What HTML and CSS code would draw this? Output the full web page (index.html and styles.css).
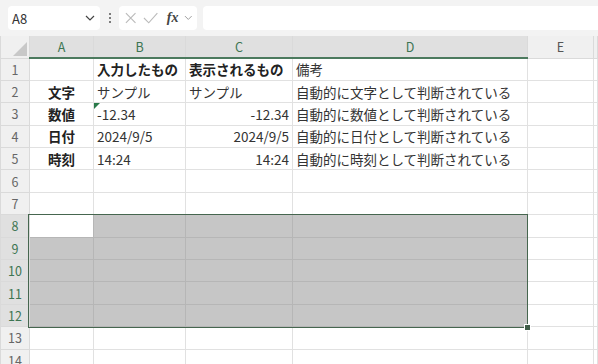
FILE: index.html
```html
<!DOCTYPE html>
<html lang="ja">
<head>
<meta charset="utf-8"/>
<title>Sheet1</title>
<link rel="stylesheet" href="styles.css">
</head>
<body>
<div class="toolbar">
  <div class="namebox">
    <span>A8</span>
    <svg width="10" height="6" viewBox="0 0 10 6"><path d="M1 1 L5 5 L9 1" fill="none" stroke="#444" stroke-width="1.2"/></svg>
  </div>
  <div class="kebab"><i></i><i></i><i></i></div>
  <div class="fxbox">
    <svg width="14" height="14" viewBox="0 0 14 14"><path d="M2 2 L12 12 M12 2 L2 12" stroke="#bbb" stroke-width="1.2"/></svg>
    <svg width="16" height="14" viewBox="0 0 16 14"><path d="M1 7 L6 12 L15 2" fill="none" stroke="#bbb" stroke-width="1.2"/></svg>
    <span class="fx">fx</span>
    <svg width="9" height="6" viewBox="0 0 9 6"><path d="M1 1 L4.5 4.5 L8 1" fill="none" stroke="#999" stroke-width="1"/></svg>
  </div>
  <div class="formula"></div>
</div>

<div class="sheet">
  <table class="grid">
    <colgroup>
      <col style="width:29px"><col style="width:64px"><col style="width:92px"><col style="width:107px"><col style="width:235px"><col style="width:66px"><col>
    </colgroup>
    <tr class="colhdr">
      <th class="corner"><span class="tri"></span></th>
      <th class="on">A</th><th class="on">B</th><th class="on">C</th><th class="on">D</th><th>E</th><th></th>
    </tr>
    <tr><th>1</th><td></td><td class="b">入力したもの</td><td class="b">表示されるもの</td><td>備考</td><td></td><td></td></tr>
    <tr><th>2</th><td class="b c">文字</td><td>サンプル</td><td>サンプル</td><td>自動的に文字として判断されている</td><td></td><td></td></tr>
    <tr><th>3</th><td class="b c">数値</td><td class="flag">-12.34</td><td class="r">-12.34</td><td>自動的に数値として判断されている</td><td></td><td></td></tr>
    <tr><th>4</th><td class="b c">日付</td><td>2024/9/5</td><td class="r">2024/9/5</td><td>自動的に日付として判断されている</td><td></td><td></td></tr>
    <tr><th>5</th><td class="b c">時刻</td><td>14:24</td><td class="r">14:24</td><td>自動的に時刻として判断されている</td><td></td><td></td></tr>
    <tr><th>6</th><td></td><td></td><td></td><td></td><td></td><td></td></tr>
    <tr><th>7</th><td></td><td></td><td></td><td></td><td></td><td></td></tr>
    <tr class="sel"><th>8</th><td class="active"></td><td></td><td></td><td></td><td class="out"></td><td class="out"></td></tr>
    <tr class="sel"><th>9</th><td></td><td></td><td></td><td></td><td class="out"></td><td class="out"></td></tr>
    <tr class="sel"><th>10</th><td></td><td></td><td></td><td></td><td class="out"></td><td class="out"></td></tr>
    <tr class="sel"><th>11</th><td></td><td></td><td></td><td></td><td class="out"></td><td class="out"></td></tr>
    <tr class="sel"><th>12</th><td></td><td></td><td></td><td></td><td class="out"></td><td class="out"></td></tr>
    <tr><th>13</th><td></td><td></td><td></td><td></td><td></td><td></td></tr>
    <tr><th>14</th><td></td><td></td><td></td><td></td><td></td><td></td></tr>
  </table>
  <div class="selection"><span class="handle"></span></div>
</div>
</body>
</html>
```

FILE: styles.css
```css
body {
  margin: 0;
  background-color: #ffffff;
  font-family: "Noto Sans CJK JP", "Noto Sans", sans-serif;
  overflow: hidden;
}
.toolbar {
  display: flex;
  align-items: center;
  height: 36px;
  padding: 0 0 0 8px;
  background-color: #f3f3f3;
  box-sizing: border-box;
}
.namebox {
  display: flex;
  align-items: center;
  justify-content: space-between;
  width: 92px;
  height: 24px;
  padding: 0 5px 0 4px;
  box-sizing: border-box;
  background-color: #ffffff;
  border-radius: 4px;
  font-size: 13px;
  color: #333;
}
.kebab {
  display: flex;
  flex-direction: column;
  gap: 2px;
  margin: 0 8px 0 9px;
}
.kebab i {
  display: block;
  width: 2px;
  height: 2px;
  background-color: #555;
  border-radius: 1px;
}
.fxbox {
  display: flex;
  align-items: center;
  gap: 6px;
  width: 78px;
  height: 24px;
  padding: 0 4px 0 5px;
  box-sizing: border-box;
  background-color: #ffffff;
  border-radius: 4px;
}
.fx {
  font-family: "Liberation Serif", serif;
  font-style: italic;
  font-weight: bold;
  font-size: 14px;
  color: #444;
  margin-left: 2px;
}
.formula {
  flex: 1;
  height: 24px;
  margin-left: 6px;
  background-color: #ffffff;
  border-radius: 4px 0 0 4px;
}
.sheet {
  position: relative;
}
.grid {
  border-collapse: collapse;
  table-layout: fixed;
  width: 100%;
  font-size: 13.5px;
  color: #333;
}
.grid tr {
  height: 22.4px;
}
.grid td {
  border: 1px solid #e1e1e1;
  padding: 0 3px;
  white-space: nowrap;
  overflow: hidden;
  line-height: 20px;
}
.grid th {
  background-color: #f0f0f0;
  border: 1px solid #dadada;
  font-weight: normal;
  font-size: 12.5px;
  color: #666;
  padding: 0;
}
.colhdr {
  height: 22px !important;
}
.colhdr th {
  border-top: none;
  color: #555;
}
.colhdr th.on {
  background-color: #e0e0e0;
  color: #3d7552;
  border-bottom: 2px solid #4c7a5e;
}
.corner {
  position: relative;
}
.tri {
  position: absolute;
  right: 2px;
  bottom: 2px;
  width: 0;
  height: 0;
  border-left: 14px solid transparent;
  border-bottom: 14px solid #c8c8c8;
}
.grid .b {
  font-weight: bold;
  color: #222;
}
.grid .c {
  text-align: center;
}
.grid .r {
  text-align: right;
}
.grid .flag {
  position: relative;
}
.flag::before {
  content: "";
  position: absolute;
  left: 0;
  top: 0;
  border-top: 6px solid #2a7a4a;
  border-right: 6px solid transparent;
}
.sel th {
  background-color: #e0e0e0;
  color: #3d7552;
}
.sel td {
  background-color: #c6c6c6;
  border-color: #b6b6b6;
}
.sel td.out {
  background-color: #ffffff;
  border-color: #e1e1e1;
}
.sel td.active {
  background-color: #ffffff;
}
.selection {
  position: absolute;
  left: 28px;
  top: 178px;
  width: 498px;
  height: 112px;
  border: 1.5px solid #46664f;
  pointer-events: none;
}
.handle {
  position: absolute;
  right: -4px;
  bottom: -4px;
  width: 5px;
  height: 5px;
  background-color: #3f5c48;
  border: 1px solid #ffffff;
}
```
